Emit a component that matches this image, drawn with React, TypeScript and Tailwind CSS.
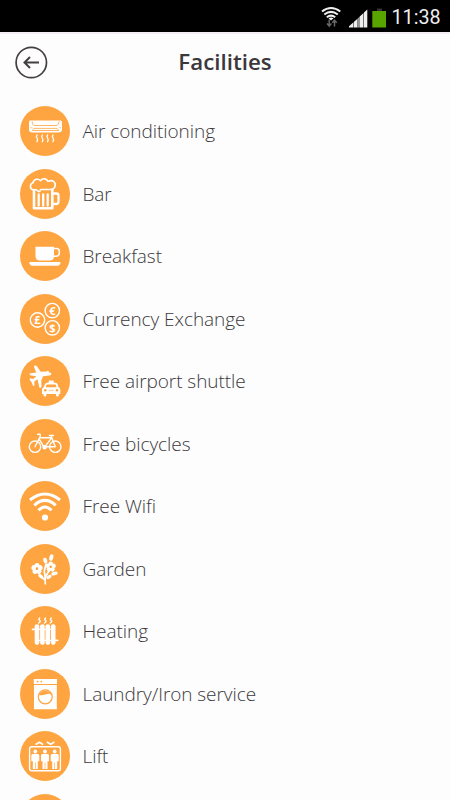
import React from "react";

const O = "#fea440";
const line = { fill: "none", stroke: "#fff", strokeLinecap: "round", strokeLinejoin: "round" } as const;

function AirIcon() {
  return (
    <g>
      <path d="M10 14.500H40.500Q42 14.500 42 16V24Q41.500 26.500 38.500 26.500H12.500Q9.300 26.500 9 24V16Q9 14.500 10 14.500Z" fill="#fff" />
      <path d="M12 15.500L13 18.500Q13.500 19.500 15 19.500H36Q37.500 19.500 38 18.500L39.300 15.500" fill="none" stroke={O} strokeWidth=".8" />
      <path d="M10 21.800H12.500M39 21.800H41" stroke={O} strokeWidth=".6" />
      <path d="M12.500 24.500L14 22.400H37L38.800 24.500Z" fill="none" stroke={O} strokeWidth=".8" />
      <path d="M17 29q-1.300 1.400 0 3.100t0 3.600M22.300 29q-1.300 1.400 0 3.100t0 3.600M27.600 29q-1.300 1.400 0 3.100t0 3.600M33 29q-1.300 1.400 0 3.100t0 3.600" {...line} strokeWidth="1.300" />
    </g>
  );
}

function BarIcon() {
  return (
    <g {...line} strokeWidth="1.600">
      <path d="M13.500 21C9.500 20.500 9.500 14.800 13 13.800C13.800 9.800 18.500 9.200 20.500 11.700C22.800 8.600 27 9.600 28 12.400C32.500 10.300 36.300 13.400 35 17.200Q34.500 19.800 31.500 20.500H20.500Q20 23.500 18 22Q16 20 13.500 21Z" />
      <path d="M14 21.500V39.300H32.300V20.800" strokeWidth="2.600" />
      <path d="M33 24.500H36.500Q38.500 24.500 38.500 26.500V32.500Q38.500 34.800 36.500 35H33" strokeWidth="2.300" />
      <path d="M18.700 25.500V36.500M23.200 25.500V36.500M27.700 25.500V36.500" strokeWidth="2.300" />
    </g>
  );
}

function CupIcon() {
  return (
    <g fill="#fff">
      <path d="M15.500 15.800H34V25Q34 29.500 29.500 29.500H20Q15.500 29.500 15.500 25Z" />
      <path d="M33.500 17.600H36.500Q39.300 17.600 39.300 20.500V22Q39.300 25.300 35.500 25.300H33.500" fill="none" stroke="#fff" strokeWidth="1.500" />
      <path d="M9.500 31H40.300V33L38.500 34.800H11.500L9.500 33Z" />
    </g>
  );
}

function CurrencyIcon() {
  const coins = [["€", 32.3, 16.6], ["£", 17.5, 26], ["$", 32.3, 33.8]] as const;
  return (
    <g>
      {coins.map(([sign, x, y]) => (
        <g key={sign}>
          <circle cx={x} cy={y} r="7.200" {...line} strokeWidth="1.400" />
          <text x={x} y={y + 4} textAnchor="middle" fill="#fff" fontFamily="Open Sans, sans-serif" fontWeight="700" fontSize="11">{sign}</text>
        </g>
      ))}
    </g>
  );
}

function ShuttleIcon() {
  return (
    <g fill="#fff">
      <path d="M14.200 9.800Q16 9 17.500 11L20.600 15.800L27 15.600L27.300 14.700L28.800 15L28.600 16.200Q31.300 16.300 31.400 17.700Q31.500 19.500 29 19.400L23 20.300L21.300 24.500L21.500 31L19.600 32.300L17.400 23.200L14.300 25.500L14.500 29.500L13.200 30.200L11.700 26.500L9.500 23.400L10.500 22.300L13.200 23L16.300 20.300L10 19.200L9.500 17.500L16.300 16.500L14 11Z" />
      <path d="M28.500 26.800L29 24.500H33.500L34 26.800H35.500Q37 26.800 37.500 28.300L38.600 31.200Q40.300 32 40.300 33.800V38H38.800V39.500Q38.800 40.500 37.500 40.500T36 39.500V38H26.300V39.500Q26.300 40.500 25 40.500T23.500 39.500V38H22V33.800Q22 32 23.700 31.200L24.900 28.300Q25.400 26.800 27 26.800Z" />
      <path d="M26.700 28.600H35.600L36.600 31.200H25.700Z" fill={O} />
      <circle cx="25.300" cy="34.300" r="1.250" fill={O} /><circle cx="37" cy="34.300" r="1.250" fill={O} />
      <path d="M28.800 34.600H33.500" stroke={O} strokeWidth=".6" />
    </g>
  );
}

function BikeIcon() {
  return (
    <g {...line} strokeWidth="1.400">
      <circle cx="15" cy="27.700" r="5.700" />
      <circle cx="35.300" cy="27.700" r="5.700" />
      <path d="M15 27.700L20.300 17.200L20 15.200H17.600M19.700 18.700H31M19.200 20L24.300 28.700L31.800 18.700L35.300 27.700H25M31.800 18.700L31.200 16.800M29.400 16.500H33.500" />
      <circle cx="24.600" cy="28.300" r="1.500" fill="#fff" />
    </g>
  );
}

function WifiIcon() {
  return (
    <g {...line} strokeWidth="3" strokeLinecap="butt">
      <path d="M10 19Q25 7 40 19" />
      <path d="M14.300 24.300Q25 14.500 35.700 24.300" />
      <path d="M18.500 29.300Q25 22.500 31.500 29.300" />
      <circle cx="25" cy="36.500" r="3.100" fill="#fff" stroke="none" />
    </g>
  );
}

function Flower({ x, y, r }: { x: number; y: number; r: number }) {
  return (
    <g transform={`translate(${x} ${y})`}>
      {[0, 72, 144, 216, 288].map((a) => <circle key={a} cx="0" cy={-r * 0.56} r={r * 0.44} transform={`rotate(${a})`} fill="#fff" />)}
      <circle r={r * 0.23} fill={O} />
    </g>
  );
}

function GardenIcon() {
  return (
    <g>
      <path d="M25.300 39.800Q25.500 33 24.300 27L26 20M25.200 36Q21 33 20.500 31M25.200 34Q27 30 29.500 26" {...line} strokeWidth="1.700" />
      <Flower x={17} y={24.7} r={5.8} />
      <Flower x={30.7} y={22.8} r={5.3} />
      <g fill="#fff">
        <ellipse cx="31.300" cy="13.600" rx="2" ry="3.300" transform="rotate(12 31.300 13.600)" />
        <ellipse cx="25.300" cy="16.600" rx="1.900" ry="3" transform="rotate(-18 25.300 16.600)" />
        <ellipse cx="20.800" cy="32.300" rx="1.700" ry="3" transform="rotate(-55 20.800 32.300)" />
        <ellipse cx="34.500" cy="29.600" rx="1.800" ry="3.200" transform="rotate(75 34.500 29.600)" />
        <ellipse cx="29" cy="33" rx="1.600" ry="2.900" transform="rotate(60 29 33)" />
      </g>
    </g>
  );
}

function HeatingIcon() {
  return (
    <g>
      <g fill="#fff">
        <rect x="14.700" y="18.300" width="4.600" height="20.500" rx="2" />
        <rect x="20.100" y="18.300" width="4.600" height="20.500" rx="2" />
        <rect x="25.500" y="18.300" width="4.600" height="20.500" rx="2" />
        <rect x="30.900" y="18.300" width="4.600" height="20.500" rx="2" />
      </g>
      <path d="M12.500 23.300H16M34 34.300H37.700" {...line} strokeWidth="1.700" />
      <path d="M18 23.300H33M18 34.300H33" stroke="#fff" strokeWidth="1.200" />
      <path d="M19.700 12q-1.500 1.300 0 2.300t-1 2.700M25.500 12q-1.500 1.300 0 2.300t-1 2.700M31.200 12q-1.500 1.300 0 2.300t-1 2.700" {...line} strokeWidth="1.400" />
    </g>
  );
}

function LaundryIcon() {
  return (
    <g>
      <path d="M13.800 10H37V15H13.800ZM14 16H36.800V40.200H14Z" fill="#fff" />
      <circle cx="17.600" cy="12.600" r=".9" fill={O} /><circle cx="21.300" cy="12.600" r=".9" fill={O} />
      <circle cx="25.300" cy="27.800" r="7" fill="#fff" stroke={O} strokeWidth="1.200" />
      <path d="M19.300 26Q20 22 25.300 21.700Q30.500 22 31.500 26Q29 24 26 25.300Q22.500 27 19.300 26Z" fill={O} />
    </g>
  );
}

function LiftIcon() {
  return (
    <g>
      <rect x="9.600" y="15.800" width="30.800" height="24" rx="2.200" {...line} strokeWidth="1.400" />
      <path d="M16 13.200L19.300 11.200L22.600 13.200M27.300 11.300L30.600 13.300L34 11.300" {...line} strokeWidth="1.600" />
      {[15.3, 25, 34.7].map((x) => (
        <g key={x} transform={`translate(${x} 0)`} fill="#fff">
          <circle cx="0" cy="20.500" r="1.900" />
          <path d="M-2.700 22.900H2.700Q4 22.900 4 24.400V30.200H2.500V38H.3V31.500H-.3V38H-2.500V30.200H-4V24.400Q-4 22.900 -2.700 22.900Z" />
        </g>
      ))}
    </g>
  );
}

const facilities: { label: string; Icon?: () => React.ReactElement }[] = [
  { label: "Air conditioning", Icon: AirIcon },
  { label: "Bar", Icon: BarIcon },
  { label: "Breakfast", Icon: CupIcon },
  { label: "Currency Exchange", Icon: CurrencyIcon },
  { label: "Free airport shuttle", Icon: ShuttleIcon },
  { label: "Free bicycles", Icon: BikeIcon },
  { label: "Free Wifi", Icon: WifiIcon },
  { label: "Garden", Icon: GardenIcon },
  { label: "Heating", Icon: HeatingIcon },
  { label: "Laundry/Iron service", Icon: LaundryIcon },
  { label: "Lift", Icon: LiftIcon },
  { label: "" },
];

function StatusBar() {
  return (
    <div className="flex h-8 shrink-0 items-start justify-end bg-black">
      <svg width="78" height="32" viewBox="0 0 78 32">
        <g fill="none" stroke="#eee" strokeWidth="2">
          <path d="M10 11.500Q19 4.500 28.300 11.500" />
          <path d="M12.300 14.500Q19 9.300 25.800 14.500" />
          <path d="M14.800 17.200Q19 14 23.200 17.200" />
        </g>
        <path d="M16.500 18.300Q19 16.500 21.500 18.300L19 20.500Z" fill="#eee" />
        <path d="M17.200 19.500V26M15 23.500L17.200 26L19.400 23.500M22.500 26.500V20.500M20.300 22.800L22.500 20.200L24.700 22.800" fill="none" stroke="#666" strokeWidth="1.500" />
        <path d="M37 27.500V26.300L41.500 22.300V27.500ZM42 27.500V21.800L45.500 18.700V27.500Z" fill="#eee" />
        <path d="M45.500 27.500V18.700L48 16.300V27.500Z" fill="#999" />
        <path d="M48 27.500V16.300L51.500 13V27.500ZM52 27.500V12.500L55.300 9.500V27.500Z" fill="#eee" />
        <path d="M65 8.500H70V11H65Z" fill="#333" />
        <path d="M60.300 11H74V27.500H60.300Z" fill="#58a500" />
      </svg>
      <span className="w-[60px] whitespace-nowrap pl-[1.500px] pt-[6px] font-['Roboto',sans-serif] text-[19.700px] leading-6 text-[#eee]">11:38</span>
    </div>
  );
}

export default function App() {
  return (
    <div className="flex h-[800px] w-[450px] flex-col overflow-hidden bg-[#fdfdfd] font-['Open_Sans',sans-serif]">
      <StatusBar />
      <header className="grid h-[74px] shrink-0 grid-cols-[60px_1fr_60px] items-start border-t-2 border-[#f5eef5] pt-3">
        <button className="ml-[15px] h-8 w-8" aria-label="Back">
          <svg width="33" height="33" viewBox="0 0 33 33" fill="none" stroke="#443f43">
            <circle cx="16.300" cy="16.500" r="15.200" strokeWidth="1.700" />
            <path d="M24 16.500H9.500M15 11L9.500 16.500L15 22" strokeWidth="2" />
          </svg>
        </button>
        <h1 className="text-center text-[22.300px] font-semibold leading-8 text-[#3b373a]">Facilities</h1>
      </header>
      <ul className="flex flex-col gap-[12.500px]">
        {facilities.map(({ label, Icon }, i) => (
          <li key={i} className="flex h-[50px] shrink-0 items-center gap-[12.500px] pl-5">
            <svg width="50" height="50" viewBox="0 0 50 50" className="shrink-0">
              <circle cx="25" cy="25" r="25" fill={O} />
              {Icon && <Icon />}
            </svg>
            <span className="whitespace-nowrap text-[19px] font-light leading-7 tracking-[-0.06px] text-[#3c393c]">{label}</span>
          </li>
        ))}
      </ul>
    </div>
  );
}
